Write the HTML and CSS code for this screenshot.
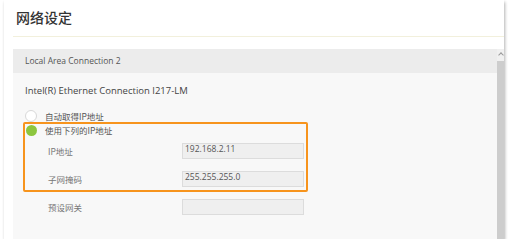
FILE: index.html
```html
<!DOCTYPE html>
<html lang="zh-CN">
<head>
    <meta charset="UTF-8">
    <title>网络设定</title>
    <link rel="stylesheet" href="styles.css">
</head>
<body>
    <div class="card">
        <h1 class="title">网络设定</h1>
        <div class="rule"></div>
        <div class="panel">
            <div class="panel-main">
                <div class="panel-head">Local Area Connection 2</div>
                <div class="panel-body">
                    <div class="nic">Intel(R) Ethernet Connection I217-LM</div>
                    <div class="radio-row">
                        <span class="radio"></span>
                        <span class="radio-text">自动取得IP地址</span>
                    </div>
                    <div class="highlight">
                        <div class="radio-row">
                            <span class="radio checked"></span>
                            <span class="radio-text">使用下列的IP地址</span>
                        </div>
                        <div class="field first">
                            <span class="field-label">IP地址</span>
                            <span class="field-input">192.168.2.11</span>
                        </div>
                        <div class="field">
                            <span class="field-label">子网掩码</span>
                            <span class="field-input">255.255.255.0</span>
                        </div>
                    </div>
                    <div class="field outside">
                        <span class="field-label">预设网关</span>
                        <span class="field-input"></span>
                    </div>
                </div>
            </div>
            <div class="scrollbar">
                <span class="arrow"></span>
                <span class="thumb"></span>
            </div>
        </div>
    </div>
</body>
</html>
```

FILE: styles.css
```css
body {
    margin: 0;
    background: #fff;
    font-family: "Open Sans", "Noto Sans CJK SC", sans-serif;
    color: #555;
}

.card {
    margin-left: 4px;
    width: 500px;
    height: 239px;
    background: #fff;
    box-shadow: 1px 2px 3px rgba(0, 0, 0, 0.3);
    display: flex;
    flex-direction: column;
}

.title {
    margin: 0;
    padding: 6px 0 0 12px;
    height: 24px;
    font-family: "Noto Sans CJK SC", sans-serif;
    font-size: 14px;
    font-weight: 500;
    line-height: 22px;
    color: #333;
}

.rule {
    margin: 6px 0 0 9px;
    height: 1px;
    background: #f2f0dc;
}

.panel {
    margin: 12px 0 0 9px;
    flex: 1;
    display: flex;
}

.panel-main {
    flex: 1;
    display: flex;
    flex-direction: column;
    background: #f8f8f8;
}

.panel-head {
    height: 24px;
    line-height: 24px;
    padding-left: 12px;
    font-size: 8.5px;
    color: #555;
    background: #ececec;
}

.panel-body {
    flex: 1;
    padding-left: 12px;
}

.nic {
    margin-top: 10px;
    height: 16px;
    line-height: 16px;
    font-size: 9.5px;
    color: #444;
}

.radio-row {
    display: flex;
    align-items: center;
    height: 12px;
    margin-top: 11px;
}

.radio {
    width: 10px;
    height: 10px;
    margin-left: 0;
    border: 1px solid #d8d8d8;
    border-radius: 50%;
    background: #fff;
}

.radio.checked {
    width: 11px;
    height: 11px;
    margin-left: 1px;
    border: none;
    background: #8dc63f;
}

.radio-text {
    margin-left: 8px;
    font-family: "Noto Sans CJK SC", sans-serif;
    font-size: 8.5px;
    color: #555;
}

.highlight {
    margin-left: -2px;
    width: 281px;
    height: 66px;
    border: 2px solid #f7941d;
    border-radius: 2px;
}

.highlight .radio-row {
    margin-top: 0;
}

.highlight .radio-text {
    margin-left: 8px;
}

.field {
    display: flex;
    align-items: center;
    margin-top: 12px;
    padding-left: 23px;
}

.field.first {
    margin-top: 7px;
}

.field.outside {
    margin-top: 7px;
}

.field-label {
    width: 134px;
    font-family: "Noto Sans CJK SC", sans-serif;
    font-size: 8.5px;
    color: #777;
}

.field-input {
    box-sizing: border-box;
    width: 122px;
    height: 16px;
    padding: 0 0 0 2px;
    font-size: 8.5px;
    line-height: 10px;
    color: #555;
    background: #efefef;
    border: 1px solid #dcdcdc;
}

.scrollbar {
    width: 7px;
    display: flex;
    flex-direction: column;
    align-items: center;
    background: #f0f0f0;
}

.arrow {
    margin-top: 4px;
    width: 3px;
    height: 3px;
    border-top: 1px solid #999;
    border-left: 1px solid #999;
    transform: rotate(45deg);
}

.thumb {
    margin-top: 4px;
    width: 7px;
    flex: 1;
    background: #cdcdcd;
}
```
